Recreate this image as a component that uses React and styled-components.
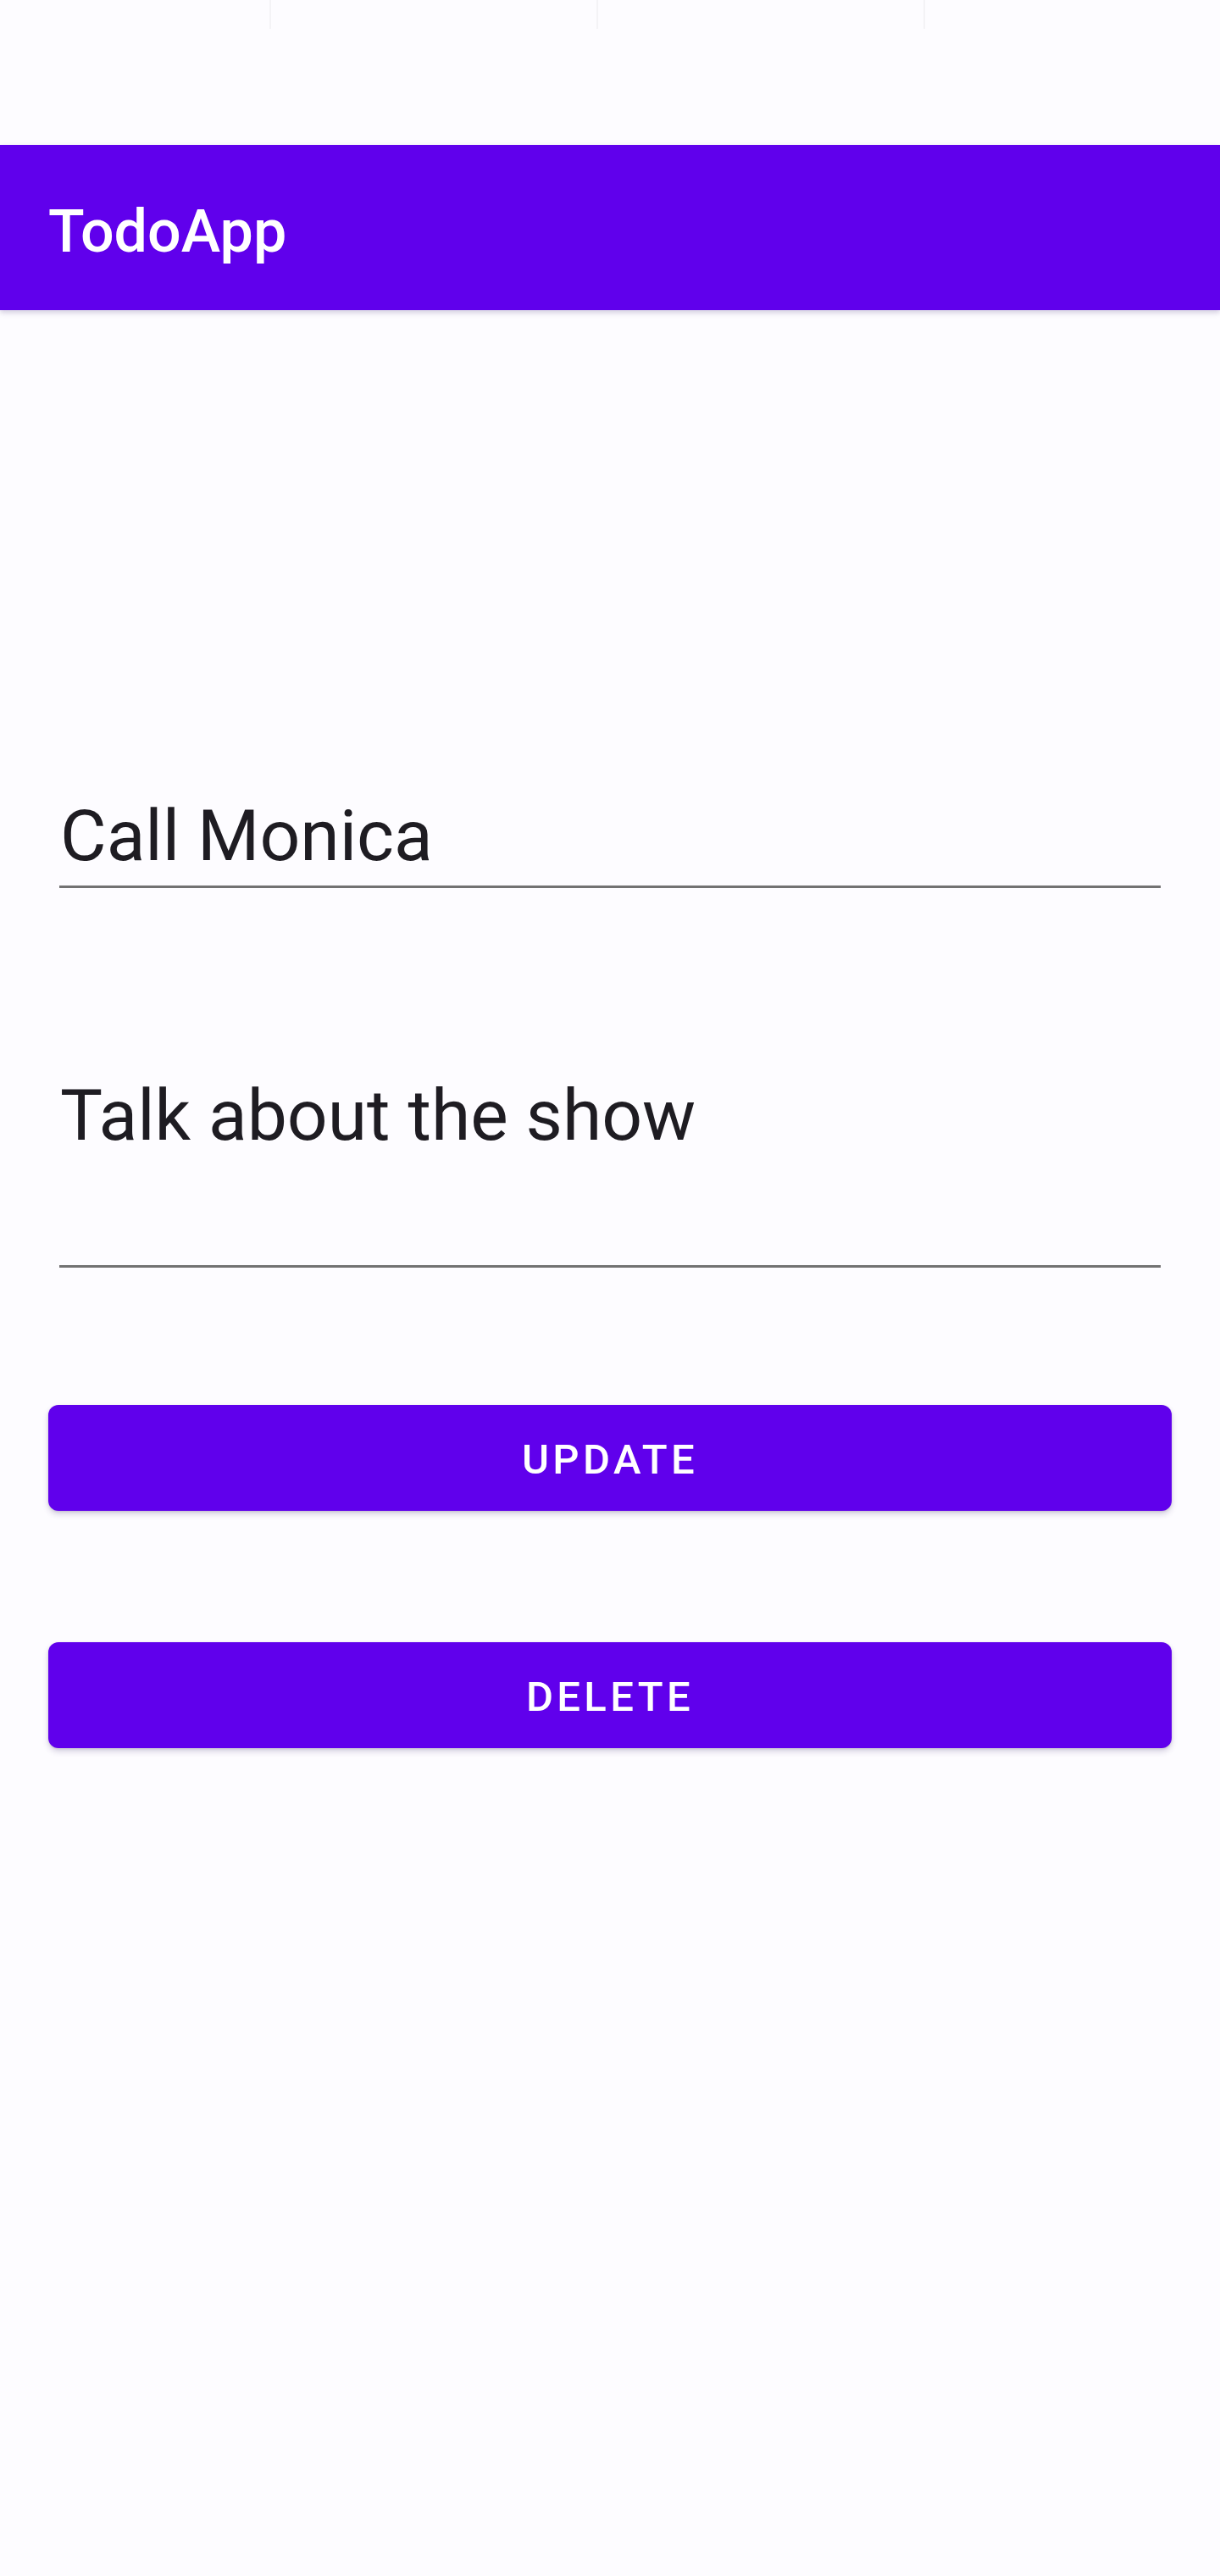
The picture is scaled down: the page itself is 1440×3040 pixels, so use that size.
import React from 'react';
import styled, { createGlobalStyle } from 'styled-components';

const GlobalStyle = createGlobalStyle`
  html, body {
    margin: 0;
    padding: 0;
    background: #fdfcff;
  }
  body {
    font-family: Roboto, 'Liberation Sans', Arial, sans-serif;
  }
`;

const App = () => {
  return (
    <>
      <GlobalStyle />
      <Screen>
        <StatusBar>
          <StatusCell />
          <StatusCell />
          <StatusCell />
          <StatusCell />
        </StatusBar>
        <AppBar>
          <Title>TodoApp</Title>
        </AppBar>
        <Content>
          <Field>
            <FieldText>Call Monica</FieldText>
          </Field>
          <Field multiline>
            <FieldText>Talk about the show</FieldText>
          </Field>
          <Actions>
            <Button>Update</Button>
            <Button>Delete</Button>
          </Actions>
        </Content>
      </Screen>
    </>
  );
};

const Screen = styled.main`
  min-height: 3040px;
  background: #fdfcff;
  display: flex;
  flex-direction: column;
`;

const StatusBar = styled.div`
  height: 171px;
  display: grid;
  grid-template-columns: 320px 386px 386px 1fr;
`;

const StatusCell = styled.div`
  height: 34px;
  border-right: 2px solid #f4f3f6;
  &:last-child {
    border-right: none;
  }
`;

const AppBar = styled.header`
  height: 195px;
  background: #6000ec;
  display: flex;
  align-items: center;
  padding: 0 57px;
  box-shadow: 0 3px 6px rgba(60, 40, 110, 0.22);
  position: relative;
  z-index: 1;
`;

const Title = styled.h1`
  margin: 0;
  color: #ffffff;
  font-family: Roboto, 'Liberation Sans', sans-serif;
  font-weight: 500;
  font-size: 70px;
  line-height: 1;
  letter-spacing: 0;
  position: relative;
  top: 4px;
`;

const Content = styled.section`
  display: flex;
  flex-direction: column;
  padding: 571px 57px 0;
`;

const Field = styled.div`
  margin: 0 13px;
  height: ${(p) => (p.multiline ? '226px' : '108px')};
  margin-top: ${(p) => (p.multiline ? '219px' : '0')};
  border-bottom: 3px solid #727272;
`;

const FieldText = styled.div`
  color: #1e1c22;
  font-family: Roboto, 'Liberation Sans', sans-serif;
  font-size: 84px;
  line-height: 100.8px;
  padding-left: 1px;
`;

const Actions = styled.div`
  display: flex;
  flex-direction: column;
  gap: 155px;
  margin-top: 162px;
`;

const Button = styled.button`
  height: 125px;
  width: 100%;
  border: none;
  border-radius: 12px;
  padding: 3px 0 0;
  background: #6000ec;
  color: #ffffff;
  font-family: Roboto, 'Liberation Sans', sans-serif;
  font-weight: 500;
  font-size: 49px;
  letter-spacing: 4.4px;
  text-transform: uppercase;
  box-shadow: 0 4px 7px rgba(60, 40, 110, 0.2), 0 1px 3px rgba(0, 0, 0, 0.12);
  cursor: pointer;
`;

export default App;
